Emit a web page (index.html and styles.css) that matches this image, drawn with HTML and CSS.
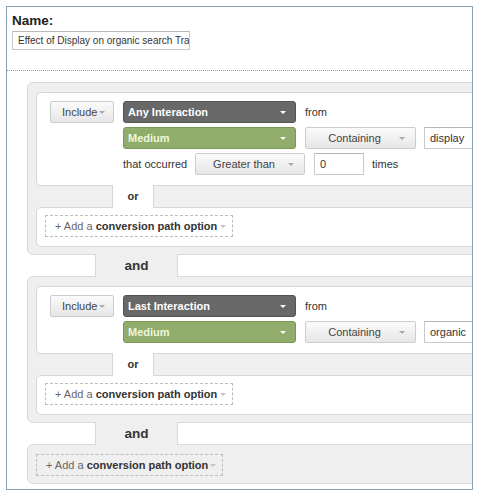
FILE: index.html
```html
<!DOCTYPE html>
<html>
<head>
<meta charset="utf-8">
<title>Conversion segment</title>
<link rel="stylesheet" href="styles.css">
</head>
<body>
<div class="frame">
  <div class="name-sec">
    <div class="name-label">Name:</div>
    <div class="name-input">Effect of Display on organic search Tra</div>
  </div>
  <div class="sep"></div>
  <div class="builder">
    <div class="group">
      <div class="card cond">
        <div class="row">
          <div class="btn include"><span>Include</span><span class="caret"></span></div>
          <div class="sel dark"><span>Any Interaction</span><span class="caret light"></span></div>
          <span class="lbl from">from</span>
        </div>
        <div class="row indent">
          <div class="sel green"><span>Medium</span><span class="caret light"></span></div>
          <div class="btn wide containing"><span class="btn-text">Containing</span><span class="caret"></span></div>
          <div class="field value">display</div>
        </div>
        <div class="row indent">
          <span class="lbl occurred">that occurred</span>
          <div class="btn wide"><span class="btn-text">Greater than</span><span class="caret"></span></div>
          <div class="field num">0</div>
          <span class="lbl times">times</span>
        </div>
      </div>
      <div class="or-row"><div class="or-tab">or</div></div>
      <div class="card add-card">
        <div class="add-btn"><span class="add-text">+ Add a <b>conversion path option</b></span><span class="caret pale"></span></div>
      </div>
    </div>
    <div class="and-row"><div class="and-tab">and</div></div>
    <div class="group">
      <div class="card cond">
        <div class="row">
          <div class="btn include"><span>Include</span><span class="caret"></span></div>
          <div class="sel dark"><span>Last Interaction</span><span class="caret light"></span></div>
          <span class="lbl from">from</span>
        </div>
        <div class="row indent">
          <div class="sel green"><span>Medium</span><span class="caret light"></span></div>
          <div class="btn wide containing"><span class="btn-text">Containing</span><span class="caret"></span></div>
          <div class="field value">organic</div>
        </div>
      </div>
      <div class="or-row"><div class="or-tab">or</div></div>
      <div class="card add-card">
        <div class="add-btn"><span class="add-text">+ Add a <b>conversion path option</b></span><span class="caret pale"></span></div>
      </div>
    </div>
    <div class="and-row"><div class="and-tab">and</div></div>
    <div class="group">
      <div class="add-btn last"><span class="add-text">+ Add a <b>conversion path option</b></span><span class="caret pale"></span></div>
    </div>
  </div>
</div>
</body>
</html>
```

FILE: styles.css
```css
html, body {
  margin: 0;
  padding: 0;
  background: #ffffff;
}

body {
  font-family: "Liberation Sans", Arial, sans-serif;
  color: #333333;
  font-size: 11px;
}

.frame {
  margin: 6px 0 0 6px;
  width: 467px;
  height: 484px;
  box-sizing: border-box;
  border: 1px solid #86a2b2;
  overflow: hidden;
}

/* Name section */
.name-sec {
  padding: 6px 0 0 5px;
}

.name-label {
  font-size: 13.5px;
  font-weight: bold;
  line-height: 16px;
  color: #222222;
}

.name-input {
  margin-top: 2px;
  width: 178px;
  height: 19px;
  box-sizing: border-box;
  border: 1px solid #c8c8c8;
  border-top-color: #b9b9b9;
  padding-left: 5px;
  font-size: 10px;
  line-height: 17px;
  color: #333333;
  white-space: nowrap;
  overflow: hidden;
}

.sep {
  margin-top: 20px;
  border-top: 1px dotted #9a9a9a;
}

/* Builder */
.builder {
  margin: 11px 0 0 20px;
  width: 520px;
}

.group {
  background: #efefef;
  border: 1px solid #d9d9d9;
  border-radius: 6px;
  padding: 9px 0 7px 8px;
}

.card {
  background: #ffffff;
  border: 1px solid #d6d6d6;
  border-radius: 5px;
}

.cond {
  padding: 8px 0 10px 13px;
}

.row {
  display: flex;
  align-items: center;
  height: 22px;
}

.row + .row {
  margin-top: 4px;
}

.row.indent {
  padding-left: 73px;
}

.add-card {
  padding: 7px 0 9px 8px;
}

.or-row,
.and-row {
  display: flex;
  height: 21px;
}

.or-tab {
  position: relative;
  margin: -1px 0 -1px 76px;
  width: 42px;
  height: 23px;
  box-sizing: border-box;
  background: #ffffff;
  border-left: 1px solid #d6d6d6;
  border-right: 1px solid #d6d6d6;
  text-align: center;
  line-height: 23px;
  font-size: 11px;
  font-weight: bold;
  color: #333333;
}

.and-tab {
  position: relative;
  margin: -1px 0 -1px 68px;
  width: 83px;
  height: 23px;
  box-sizing: border-box;
  background: #efefef;
  border-left: 1px solid #d9d9d9;
  border-right: 1px solid #d9d9d9;
  text-align: center;
  line-height: 23px;
  font-size: 13.5px;
  font-weight: bold;
  color: #333333;
}

/* Controls */
.btn {
  display: flex;
  align-items: center;
  flex: none;
  height: 22px;
  box-sizing: border-box;
  border: 1px solid #cccccc;
  border-radius: 2px;
  background: linear-gradient(#fbfbfb, #e6e6e6);
  color: #444444;
  font-size: 11px;
  white-space: nowrap;
}

.include {
  width: 64px;
  padding: 0 8px 0 11px;
}

.wide {
  width: 110px;
  padding: 0 10px;
}

.containing {
  width: 111px;
  margin-left: 9px;
}

.btn-text {
  flex: 1;
  text-align: center;
}

.caret {
  display: inline-block;
  flex: none;
  width: 0;
  height: 0;
  margin-left: auto;
  border-left: 3px solid transparent;
  border-right: 3px solid transparent;
  border-top: 3px solid #a9a9a9;
}

.btn-text + .caret {
  margin-left: 6px;
}

.caret.light {
  border-top-color: #ffffff;
}

.caret.pale {
  border-top-color: #c4c4c4;
}

.sel {
  display: flex;
  align-items: center;
  flex: none;
  width: 173px;
  height: 22px;
  box-sizing: border-box;
  border-radius: 3px;
  padding: 0 9px 0 4px;
  font-size: 11px;
  font-weight: bold;
  white-space: nowrap;
}

.row .sel.dark {
  margin-left: 9px;
}

.dark {
  background: #686868;
  border: 1px solid #545454;
  color: #ffffff;
}

.green {
  background: #90ad6b;
  border: 1px solid #7a9856;
  color: #eef6de;
}

.lbl {
  flex: none;
  font-size: 11px;
  color: #333333;
  white-space: nowrap;
}

.from {
  margin-left: 9px;
}

.occurred {
  width: 72px;
}

.times {
  margin-left: 8px;
}

.field {
  flex: none;
  height: 22px;
  box-sizing: border-box;
  border: 1px solid #cacaca;
  border-top-color: #b6b6b6;
  background: #ffffff;
  padding-left: 5px;
  font-size: 11px;
  line-height: 20px;
  color: #333333;
}

.value {
  width: 80px;
  margin-left: 8px;
}

.num {
  width: 50px;
  margin-left: 9px;
}

.add-btn {
  display: flex;
  align-items: center;
  width: 188px;
  height: 22px;
  box-sizing: border-box;
  border: 1px dashed #bdbdbd;
  padding: 0 6px 0 9px;
  font-size: 11px;
  color: #666666;
  white-space: nowrap;
}

.add-btn b {
  color: #333333;
}

.add-btn.last {
  width: 187px;
}
```
